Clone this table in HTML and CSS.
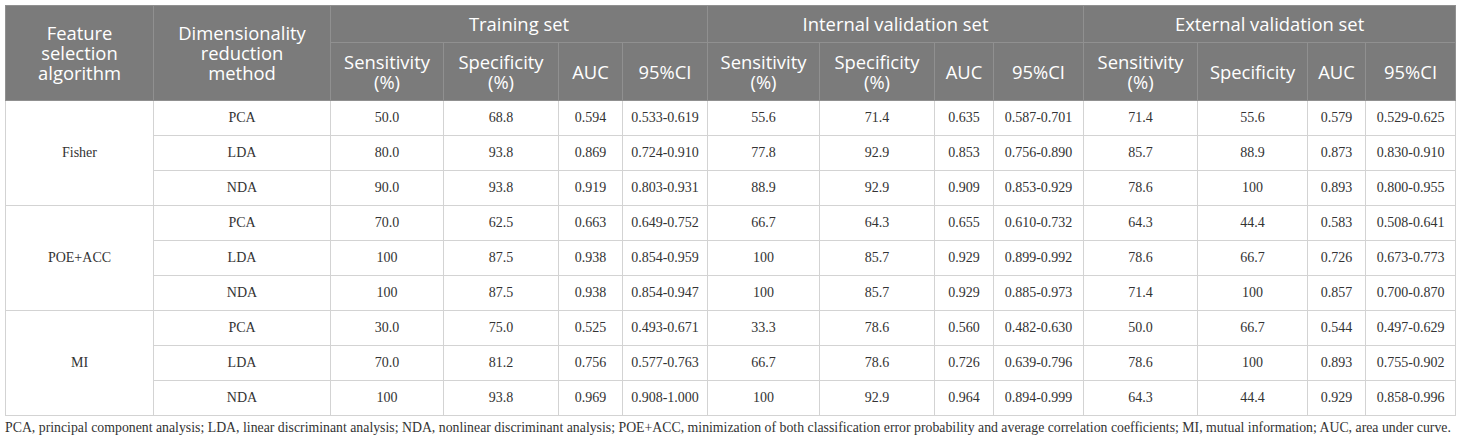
FILE: index.html
```html
<!DOCTYPE html>
<html>
<head>
<meta charset="utf-8">
<link rel="stylesheet" href="styles.css">
</head>
<body>
<table class="tbl">
<colgroup>
<col style="width:148px"><col style="width:177px"><col style="width:113px"><col style="width:115px"><col style="width:64px"><col style="width:85px"><col style="width:112px"><col style="width:115px"><col style="width:59px"><col style="width:90px"><col style="width:114px"><col style="width:110px"><col style="width:58px"><col style="width:90px">
</colgroup>
<thead>
<tr class="h1">
<th rowspan="2">Feature<br>selection<br>algorithm</th>
<th rowspan="2">Dimensionality<br>reduction<br>method</th>
<th colspan="4">Training set</th>
<th colspan="4">Internal validation set</th>
<th colspan="4">External validation set</th>
</tr>
<tr class="h2">
<th>Sensitivity<br>(%)</th><th>Specificity<br>(%)</th><th>AUC</th><th>95%CI</th>
<th>Sensitivity<br>(%)</th><th>Specificity<br>(%)</th><th>AUC</th><th>95%CI</th>
<th>Sensitivity<br>(%)</th><th>Specificity</th><th>AUC</th><th>95%CI</th>
</tr>
</thead>
<tbody>
<tr><td rowspan="3">Fisher</td><td>PCA</td><td>50.0</td><td>68.8</td><td>0.594</td><td>0.533-0.619</td><td>55.6</td><td>71.4</td><td>0.635</td><td>0.587-0.701</td><td>71.4</td><td>55.6</td><td>0.579</td><td>0.529-0.625</td></tr>
<tr><td>LDA</td><td>80.0</td><td>93.8</td><td>0.869</td><td>0.724-0.910</td><td>77.8</td><td>92.9</td><td>0.853</td><td>0.756-0.890</td><td>85.7</td><td>88.9</td><td>0.873</td><td>0.830-0.910</td></tr>
<tr><td>NDA</td><td>90.0</td><td>93.8</td><td>0.919</td><td>0.803-0.931</td><td>88.9</td><td>92.9</td><td>0.909</td><td>0.853-0.929</td><td>78.6</td><td>100</td><td>0.893</td><td>0.800-0.955</td></tr>
<tr><td rowspan="3">POE+ACC</td><td>PCA</td><td>70.0</td><td>62.5</td><td>0.663</td><td>0.649-0.752</td><td>66.7</td><td>64.3</td><td>0.655</td><td>0.610-0.732</td><td>64.3</td><td>44.4</td><td>0.583</td><td>0.508-0.641</td></tr>
<tr><td>LDA</td><td>100</td><td>87.5</td><td>0.938</td><td>0.854-0.959</td><td>100</td><td>85.7</td><td>0.929</td><td>0.899-0.992</td><td>78.6</td><td>66.7</td><td>0.726</td><td>0.673-0.773</td></tr>
<tr><td>NDA</td><td>100</td><td>87.5</td><td>0.938</td><td>0.854-0.947</td><td>100</td><td>85.7</td><td>0.929</td><td>0.885-0.973</td><td>71.4</td><td>100</td><td>0.857</td><td>0.700-0.870</td></tr>
<tr><td rowspan="3">MI</td><td>PCA</td><td>30.0</td><td>75.0</td><td>0.525</td><td>0.493-0.671</td><td>33.3</td><td>78.6</td><td>0.560</td><td>0.482-0.630</td><td>50.0</td><td>66.7</td><td>0.544</td><td>0.497-0.629</td></tr>
<tr><td>LDA</td><td>70.0</td><td>81.2</td><td>0.756</td><td>0.577-0.763</td><td>66.7</td><td>78.6</td><td>0.726</td><td>0.639-0.796</td><td>78.6</td><td>100</td><td>0.893</td><td>0.755-0.902</td></tr>
<tr><td>NDA</td><td>100</td><td>93.8</td><td>0.969</td><td>0.908-1.000</td><td>100</td><td>92.9</td><td>0.964</td><td>0.894-0.999</td><td>64.3</td><td>44.4</td><td>0.929</td><td>0.858-0.996</td></tr>
</tbody>
</table>
<p class="note">PCA, principal component analysis; LDA, linear discriminant analysis; NDA, nonlinear discriminant analysis; POE+ACC, minimization of both classification error probability and average correlation coefficients; MI, mutual information; AUC, area under curve.</p>
</body>
</html>
```
FILE: styles.css
```css
html, body {
  margin: 0;
  padding: 0;
  background: #ffffff;
}
body {
  padding: 5px 0 0 5px;
}
.tbl {
  border-collapse: collapse;
  table-layout: fixed;
  width: 1451px;
}
.tbl th {
  background: #7b7b7b;
  color: #ffffff;
  font-family: "Open Sans", "Noto Sans", sans-serif;
  font-weight: 400;
  font-size: 18.4px;
  line-height: 20px;
  text-align: center;
  vertical-align: middle;
  border: 1px solid #909090;
  padding: 0 1px;
}
.tbl .h1 th {
  height: 36px;
}
.tbl .h2 th {
  height: 57px;
}
.tbl td {
  font-family: "Liberation Serif", "Times New Roman", serif;
  font-size: 14px;
  color: #333333;
  text-align: center;
  vertical-align: middle;
  border: 1px solid #d3d3d3;
  height: 34px;
  padding: 0 2px;
}
.note {
  margin: 4px 0 0 0;
  font-family: "Liberation Serif", "Times New Roman", serif;
  font-size: 13.8px;
  line-height: 16px;
  color: #333333;
  white-space: nowrap;
}
```
